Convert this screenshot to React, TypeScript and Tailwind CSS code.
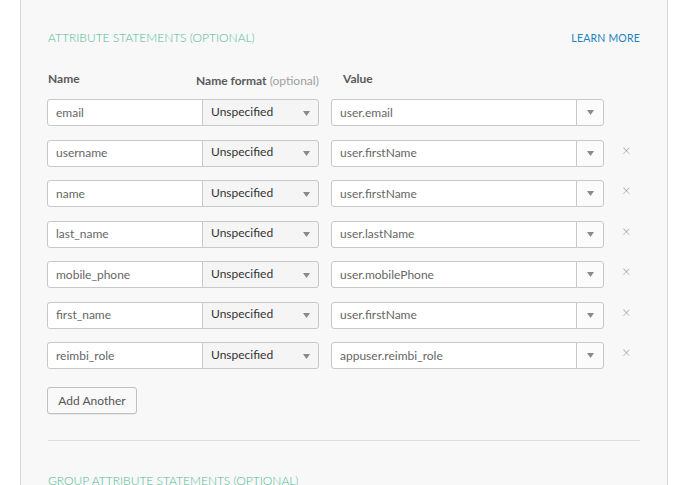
import React from "react";

const rows = [
  { name: "email", value: "user.email", remove: false },
  { name: "username", value: "user.firstName", remove: true },
  { name: "name", value: "user.firstName", remove: true },
  { name: "last_name", value: "user.lastName", remove: true },
  { name: "mobile_phone", value: "user.mobilePhone", remove: true },
  { name: "first_name", value: "user.firstName", remove: true },
  { name: "reimbi_role", value: "appuser.reimbi_role", remove: true },
];

function Caret() {
  return (
    <svg width="7" height="5" viewBox="0 0 7 5" className="block">
      <path d="M0 0 L7 0 L3.5 5 Z" fill="#8a8a8a" />
    </svg>
  );
}

export default function App() {
  return (
    <div
      className="w-[686px] h-[485px] bg-white overflow-hidden"
      style={{ fontFamily: "Lato, 'Open Sans', Arial, sans-serif" }}
    >
      <div className="ml-[20px] w-[648px] h-[485px] bg-[#f8f8f8] border-x border-[#d8d8d8] pl-[26px] pr-[27px] pt-[31px]">
        <div className="flex items-center justify-between pl-px">
          <div className="text-[12px] font-light text-[#4fbb95] leading-[14px]">
            ATTRIBUTE STATEMENTS (OPTIONAL)
          </div>
          <div className="text-[10.5px] text-[#1a82c2] leading-[14px] tracking-[0.2px]">LEARN MORE</div>
        </div>
        <div className="flex mt-[25px] h-[18px] items-center text-[12px] leading-[14px] pl-px">
          <div className="w-[148px] font-bold text-[#5a5a5a]">Name</div>
          <div className="w-[147px] mt-[3px] text-[#5a5a5a]">
            <span className="font-bold">Name format</span>{" "}
            <span className="text-[#a0a0a0]">(optional)</span>
          </div>
          <div className="font-bold text-[#5a5a5a]">Value</div>
        </div>
        <div className="flex flex-col gap-[13.5px] mt-[11px]">
          {rows.map((r) => (
            <div key={r.name} className="flex items-start h-[27px] text-[12px]">
              <div className="flex h-[27px]">
                <div className="w-[156px] h-[27px] bg-white border border-[#c8c8c8] rounded-l-[3px] flex items-center pl-[8px] text-[#666]">
                  {r.name}
                </div>
                <div className="w-[117px] h-[27px] -ml-px bg-[#f5f5f5] border border-[#c8c8c8] rounded-r-[3px] flex items-center justify-between pl-[8px] pr-[8px] text-[#333] pb-[2px]">
                  <span>Unspecified</span>
                  <span className="mt-[3px]"><Caret /></span>
                </div>
              </div>
              <div className="ml-[12px] flex h-[27px]">
                <div className="w-[246px] h-[27px] bg-white border border-[#c8c8c8] rounded-l-[3px] flex items-center pl-[8px] text-[#666]">
                  {r.value}
                </div>
                <div className="w-[28px] h-[27px] -ml-px bg-[#fbfbfb] border border-[#c8c8c8] rounded-r-[3px] flex items-center justify-center">
                  <Caret />
                </div>
              </div>
              {r.remove && (
                <div className="ml-[18px] mt-[3px] text-[#999] text-[15px] leading-[14px] font-light">×</div>
              )}
            </div>
          ))}
        </div>
        <button className="mt-[18px] h-[27px] w-[90px] border border-[#c0c0c0] rounded-[3px] bg-[#f9f9f9] text-[12px] text-[#555] shadow-[0_1px_0_rgba(0,0,0,0.06)]">
          Add Another
        </button>
        <div className="mt-[26px] ml-px border-t border-[#dedede]" />
        <div className="mt-[33px] pl-px text-[12px] font-light text-[#4fbb95] leading-[14px]">
          GROUP ATTRIBUTE STATEMENTS (OPTIONAL)
        </div>
      </div>
    </div>
  );
}
